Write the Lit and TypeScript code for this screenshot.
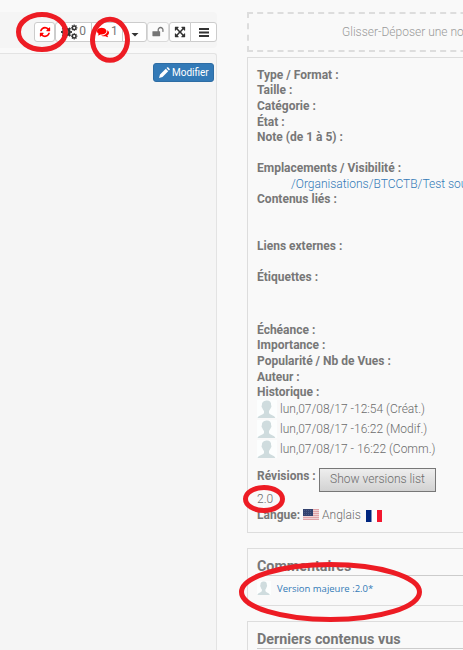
import { LitElement, html, svg, css, nothing } from "lit";
import { customElement } from "lit/decorators.js";

const P = {
  refresh:
    "M1639 1056q0 5-1 7-64 268-268 434.5t-478 166.5q-146 0-282.5-55t-243.5-157l-129 129q-19 19-45 19t-45-19-19-45v-448q0-26 19-45t45-19h448q26 0 45 19t19 45-19 45l-137 137q71 66 161 102t187 36q134 0 250-65t186-179q11-17 53-117 8-23 30-23h192q13 0 22.5 9.5t9.5 22.5zm25-800v448q0 26-19 45t-45 19h-448q-26 0-45-19t-19-45 19-45l138-138q-148-137-349-137-134 0-250 65t-186 179q-11 17-53 117-8 23-30 23h-199q-13 0-22.5-9.5t-9.5-22.5v-7q65-268 270-434.5t480-166.5q146 0 284 55.5t245 156.5l130-129q19-19 45-19t45 19 19 45z",
  comments:
    "M1408 768q0 139-94 257t-256.5 186.5-353.5 68.5q-86 0-176-16-124 88-278 128-36 9-86 16h-3q-11 0-20.5-8t-11.5-21q-1-3-1-6.5t.5-6.5 2-6l2.5-5 3.5-5.5 4-5 4.5-5 4-4.5q5-6 23-25t26-29.5 22.5-29 25-38.5 20.5-44q-124-72-195-177t-71-224q0-139 94-257t256.5-186.5 353.5-68.5 353.5 68.5 256.5 186.5 94 257zm384 256q0 120-71 224.5t-195 176.5q10 24 20.5 44t25 38.5 22.5 29 26 29.5 23 25q1 1 4 4.5t4.5 5 4 5 3.5 5.5l2.5 5 2 6 .5 6.5-1 6.5q-3 14-13 22t-22 7q-50-7-86-16-154-40-278-128-90 16-176 16-271 0-472-132 58 4 88 4 161 0 309-45t264-129q125-92 192-212t67-254q0-77-23-152 129 71 204 178t75 230z",
  expand:
    "M1411 541l-355 355 355 355 144-144q29-31 70-14 39 17 39 59v448q0 26-19 45t-45 19h-448q-42 0-59-40-17-39 14-69l144-144-355-355-355 355 144 144q31 30 14 69-17 40-59 40h-448q-26 0-45-19t-19-45v-448q0-42 40-59 39-17 69 14l144 144 355-355-355-355-144 144q-19 19-45 19-12 0-24-5-40-17-40-59v-448q0-26 19-45t45-19h448q42 0 59 40 17 39-14 69l-144 144 355 355 355-355-144-144q-31-30-14-69 17-40 59-40h448q26 0 45 19t19 45v448q0 42-39 59-13 5-25 5-26 0-45-19z",
  unlock:
    "M1728 576v256q0 26-19 45t-45 19h-64q-26 0-45-19t-19-45v-256q0-106-75-181t-181-75-181 75-75 181v192h96q40 0 68 28t28 68v576q0 40-28 68t-68 28h-960q-40 0-68-28t-28-68v-576q0-40 28-68t68-28h672v-192q0-185 131.5-316.5t316.5-131.5 316.5 131.5 131.5 316.5z",
};
const icon = (d: string, size: number) =>
  html`<svg width=${size} height=${size} viewBox="0 0 1792 1792"><path fill="currentColor" d=${d} /></svg>`;

const gear = (x: number, y: number, r: number) => svg`
  <circle cx=${x} cy=${y} r=${r} fill="none" stroke="currentColor" stroke-width=${r * 0.8} />
  <circle cx=${x} cy=${y} r=${r * 1.5} fill="none" stroke="currentColor" stroke-width=${r * 0.6}
    pathLength="16" stroke-dasharray="1 1" stroke-dashoffset="0.5" />`;
const cogs = html`<svg width="17" height="16" viewBox="0 0 17 16">
  ${gear(5.4, 8, 3.1)} ${gear(13.2, 3.8, 1.8)} ${gear(13.2, 12.2, 1.8)}
</svg>`;

const avatar = (w: number, h: number) => html`<svg class="avatar" width=${w} height=${h} viewBox="0 0 20 18" preserveAspectRatio="none">
  <rect width="20" height="18" fill="#fcfefe" />
  <path fill="#cfdcde" d="M9.5 0.5C12.8 0.3 14.4 2.3 14.1 5.3C14.7 5.6 14.5 7.4 13.8 7.8C13.4 9.3 12.6 10.2 12 11V13C13 15.2 17.5 15.2 18.300 18H0.500C1.500 15.200 6 15.200 7 13V11C6.200 10.200 5.600 9.300 5.200 7.800C4.500 7.400 4.300 5.600 4.900 5.300C4.600 2.500 6.200 0.700 9.500 0.500Z" />
</svg>`;

const usFlag = html`<svg class="flag us" width="16" height="11" viewBox="0 0 16 11">
  <rect width="16" height="11" fill="#f0d4d6" />
  ${[0, 2, 4, 6, 8, 10].map((y) => svg`<rect y=${y} width="16" height="1" fill="#e0a3a8" />`)}
  <rect width="10" height="7" fill="#33426f" />
  <path d="M1 1.500H9M1 3.500H9M1 5.500H9" stroke="#4c5a86" stroke-width="1" stroke-dasharray="1 1" />
</svg>`;
const frFlag = html`<svg class="flag fr" width="16" height="12" viewBox="0 0 16 12">
  <rect width="16" height="12" fill="#fff" /><rect width="5.500" height="12" fill="#00267f" /><rect x="11" width="5" height="12" fill="#f31830" />
</svg>`;

const FIELDS: { label: string; h: number; link?: string }[] = [
  { label: "Type / Format :", h: 15.6 },
  { label: "Taille :", h: 15.6 },
  { label: "Catégorie :", h: 15.6 },
  { label: "État :", h: 15.6 },
  { label: "Note (de 1 à 5) :", h: 31 },
  { label: "Emplacements / Visibilité :", h: 31, link: "/Organisations/BTCCTB/Test sous" },
  { label: "Contenus liés :", h: 47 },
  { label: "Liens externes :", h: 31 },
  { label: "Étiquettes :", h: 52.5 },
  { label: "Échéance :", h: 15.6 },
  { label: "Importance :", h: 15.6 },
  { label: "Popularité / Nb de Vues :", h: 15.6 },
  { label: "Auteur :", h: 15.6 },
  { label: "Historique :", h: 14.7 },
];
const HISTORY = ["lun,07/08/17 -12:54 (Créat.)", "lun,07/08/17 -16:22 (Modif.)", "lun,07/08/17 - 16:22 (Comm.)"];

@customElement("app-root")
export class AppRoot extends LitElement {
  static styles = css`
    :host {
      display: block; position: relative; width: 463px; height: 650px; overflow: hidden;
      background: #f9f9f9; color: #6c6c6c; font: 300 12px/15.6px Roboto, sans-serif;
    }
    * { box-sizing: border-box; }
    svg { display: block; flex: none; }
    .page { display: flex; gap: 30px; height: 650px; padding-top: 12px; }
    .left { width: 217px; flex: none; display: flex; flex-direction: column; }
    .toolbar {
      height: 36px; background: #f5f5f5; border-radius: 0 4px 4px 0; display: flex;
      padding: 10px 0 0 34px; margin-bottom: 5px;
    }
    .btn {
      height: 20px; border: 1px solid #ccc; background: #fff; color: #333; display: flex;
      align-items: center; justify-content: center; flex: none; border-radius: 3px;
    }
    .btn span { color: #777; font-size: 12px; font-weight: 400; }
    .b-refresh { width: 21px; color: #f00; }
    .b-cogs { width: 37px; gap: 1px; border-radius: 3px 0 0 3px; }
    .b-comments { width: 32px; margin-left: -1px; gap: 2px; color: #f00; border-radius: 0; justify-content: flex-start; padding-left: 5px; }
    .b-caret { width: 25px; margin-left: -1px; border-radius: 0 3px 3px 0; padding-top: 5px; }
    .b-unlock { width: 22px; opacity: .65; }
    .b-expand { width: 22px; border-radius: 3px 0 0 3px; }
    .b-bars { width: 27px; margin-left: -1px; border-radius: 0 3px 3px 0; }
    .canvas {
      flex: 1; background: #f5f5f5; border: solid #e3e3e3; border-width: 1px 1px 0 0;
      border-radius: 0 3px 0 0; display: flex; justify-content: flex-end; align-items: flex-start; padding: 9px 2px;
    }
    .modify {
      width: 61px; height: 19px; background: #337ab7; border: 1px solid #2e6da4; border-radius: 3px;
      color: #fff; display: flex; align-items: center; gap: 2px; padding-left: 5px; font-size: 10px; font-weight: 400;
    }
    .right { width: 240px; flex: none; }
    .drop { height: 40px; border: 2px dashed #ddd; border-right: 0; padding: 11px 0 0 93px; color: #999; white-space: nowrap; margin-bottom: 5px; width: 250px; }
    .box { border: 1px solid #ddd; width: 250px; }
    .info { height: 476px; padding: 9.900px 9px 0; }
    .label { font-weight: 700; color: #777; }
    .field { white-space: nowrap; }
    .link { color: #337ab7; padding-left: 34px; }
    .hist { display: flex; height: 20px; align-items: center; gap: 3px; white-space: nowrap; }
    .avatar { margin-bottom: 1px; }
    .rev { display: flex; margin-top: 8px; }
    .rev .label { width: 62px; flex: none; padding-top: 1px; }
    .versions {
      width: 117px; height: 24px; border: 1px solid #777; background: linear-gradient(#eee, #d2d2d2);
      display: flex; align-items: center; justify-content: center; white-space: nowrap;
    }
    .lang { display: flex; align-items: center; margin-top: 1px; }
    .us { margin: 0 3px 3px; }
    .fr { margin: 0 0 1px 5px; }
    .comments { height: 58px; margin-top: 15px; padding: 9px 0 0 9px; }
    .last { height: 60px; margin-top: 15px; padding: 9px 0 0 9px; }
    .title { font-size: 14.300px; font-weight: 700; line-height: 17px; border-bottom: 1px solid #ccc; color: #777; }
    .comment { display: flex; align-items: center; gap: 6px; margin-top: 5px; color: #337ab7; font: 400 9.5px/14px "Open Sans", sans-serif; }
    .marks { position: absolute; left: 0; top: 0; }
  `;

  render() {
    return html`
      <div class="page">
        <div class="left">
          <div class="toolbar">
            <div class="btn b-refresh">${icon(P.refresh, 12)}</div>
            <div class="btn b-cogs">${cogs}<span>0</span></div>
            <div class="btn b-comments">${icon(P.comments, 12)}<span>1</span></div>
            <div class="btn b-caret"><svg width="8" height="4" viewBox="0 0 8 4"><path d="M0.500 0H7.500L4 3.500Z" fill="#333" /></svg></div>
            <div class="btn b-unlock">${icon(P.unlock, 12)}</div>
            <div class="btn b-expand">${icon(P.expand, 12)}</div>
            <div class="btn b-bars"><svg width="10" height="9" viewBox="0 0 10 9"><path d="M0 0H10V2H0ZM0 3.500H10V5.500H0ZM0 7H10V9H0Z" fill="#333" /></svg></div>
          </div>
          <div class="canvas">
            <div class="modify">
              <svg width="11" height="11" viewBox="0 0 11 11"><path fill="#fff" d="M0 11L1 7.500L6.800 1.800L9.200 4.200L3.500 10ZM7.500 1.100L8.300.300Q8.700 0 9.100.300L10.700 1.900Q11 2.300 10.700 2.700L9.900 3.500Z" /></svg>
              Modifier
            </div>
          </div>
        </div>
        <div class="right">
          <div class="drop">Glisser-Déposer une note</div>
          <div class="box info">
            ${FIELDS.map(
              (f) => html`<div class="field" style="height:${f.h}px">
                <div class="label">${f.label}</div>
                ${f.link ? html`<div class="link">${f.link}</div>` : nothing}
              </div>`
            )}
            ${HISTORY.map((h) => html`<div class="hist">${avatar(20, 18)}<span>${h}</span></div>`)}
            <div class="rev"><div class="label">Révisions :</div><div class="versions">Show versions list</div></div>
            <div>2.0</div>
            <div class="lang"><span class="label">Langue:</span>${usFlag}<span>Anglais</span>${frFlag}</div>
          </div>
          <div class="box comments">
            <div class="title">Commentaires</div>
            <div class="comment">${avatar(14, 14)}<span>Version majeure :2.0*</span></div>
          </div>
          <div class="box last"><div class="title">Derniers contenus vus</div></div>
        </div>
      </div>
      <svg class="marks" width="463" height="650" viewBox="0 0 463 650" fill="none" stroke="#ed1c24" stroke-width="5">
        <ellipse cx="42" cy="32" rx="23.500" ry="17.500" />
        <ellipse cx="110" cy="39.800" rx="17.500" ry="20.500" />
        <ellipse cx="264" cy="499" rx="18.500" ry="11.500" />
        <ellipse cx="330.500" cy="592" rx="89" ry="27.500" />
      </svg>
    `;
  }
}
